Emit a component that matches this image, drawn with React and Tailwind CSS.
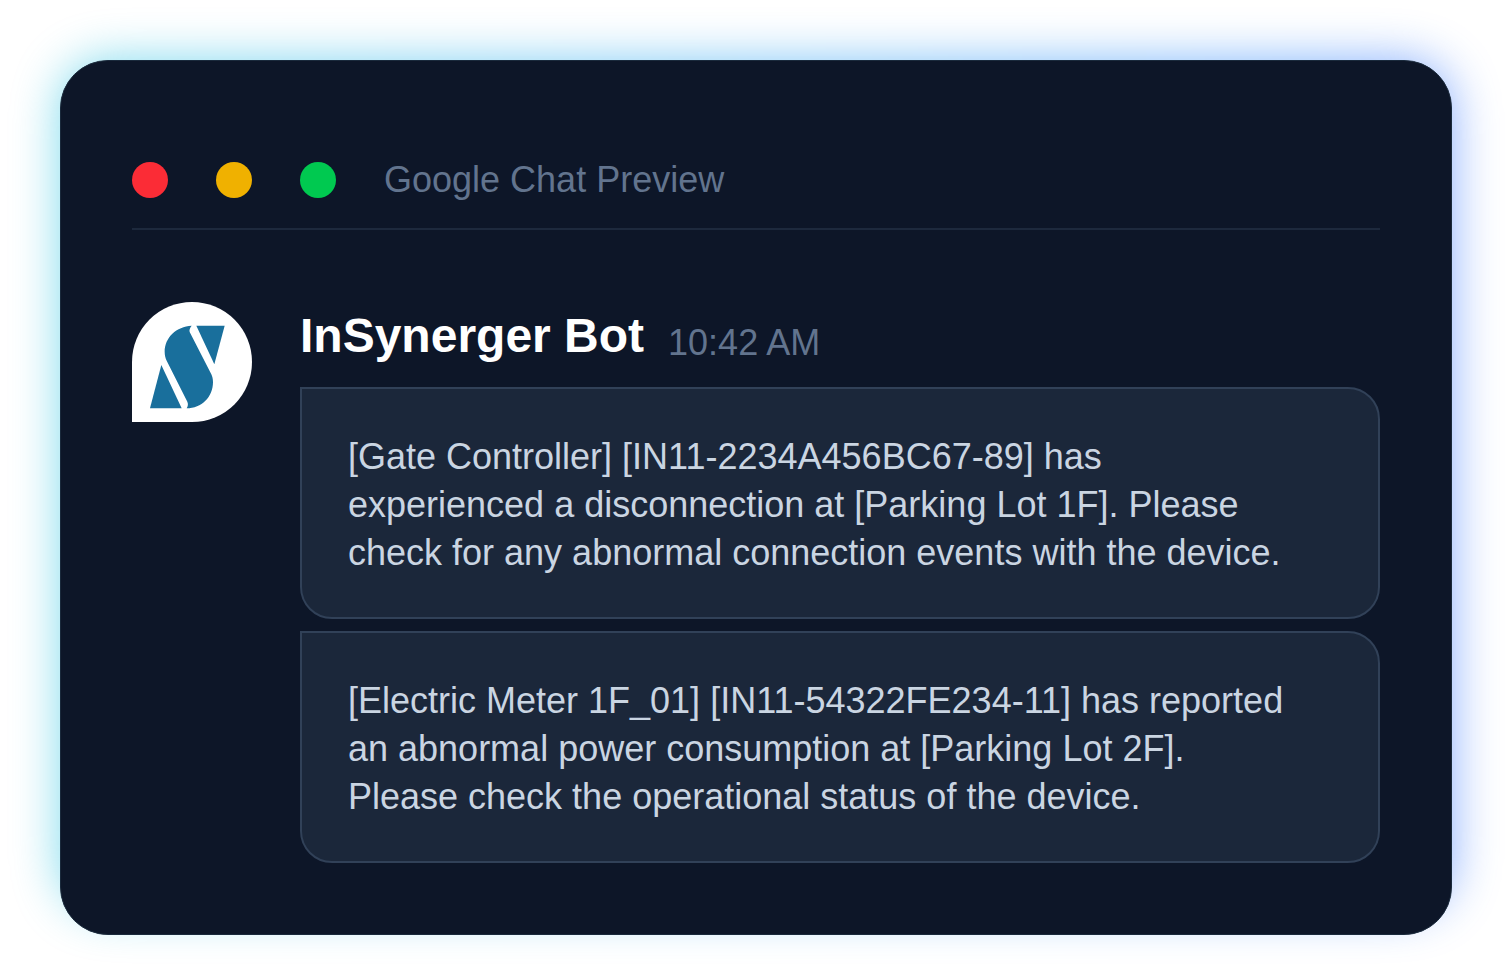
import React from 'react';

const messages = [
  '[Gate Controller] [IN11-2234A456BC67-89] has experienced a disconnection at [Parking Lot 1F]. Please check for any abnormal connection events with the device.',
  '[Electric Meter 1F_01] [IN11-54322FE234-11] has reported an abnormal power consumption at [Parking Lot 2F]. Please check the operational status of the device.',
];

function BotAvatar() {
  return (
    <div className="size-30 shrink-0 overflow-hidden rounded-full rounded-bl-none bg-white">
      <svg className="size-full" viewBox="0 0 360 360" fill="#196f9c" aria-hidden="true">
        <path d="M193 71H278L247 187Z" />
        <path d="M88 189L54 319H149Z" />
        <path d="M179 71C133 73 98 107 98 149C98 159 100 168 104 176L166 299C169 306 168 312 164 319C209 319 243 285 243 240C243 231 241 224 238 217L173 90C171 84 174 77 179 71Z" />
      </svg>
    </div>
  );
}

function Bubble({ text }) {
  return (
    <p className="rounded-[32px] rounded-tl-none border-2 border-[#314158] bg-[#1b273a] pt-11 pr-22 pb-10 pl-[46px] text-4xl leading-12 text-[#cad5e2]">
      {text}
    </p>
  );
}

export default function App() {
  return (
    <main className="bg-white px-15 pt-15 pb-9 font-['Liberation_Sans',Arial,sans-serif]">
      <div className="relative">
        {/* Glow behind the window */}
        <div className="absolute inset-x-0 top-0 bottom-6 rounded-[48px] bg-linear-to-r from-cyan-500 to-blue-600 opacity-50 blur-xl" />
        <section className="relative rounded-[48px] border border-[#1a2a3c] bg-[#0d1628] px-[71px] pt-[95px] pb-[71px]">
          <header className="flex items-center gap-12 border-b-2 border-[#1d293d] pb-6">
            <span className="size-9 rounded-full bg-[#fb2c36]" />
            <span className="size-9 rounded-full bg-[#f0b100]" />
            <span className="size-9 rounded-full bg-[#00c950]" />
            <h1 className="text-4xl leading-12 text-[#62748e]">Google Chat Preview</h1>
          </header>
          <div className="mt-18 flex items-start gap-12">
            <BotAvatar />
            <div className="min-w-0 flex-1">
              <div className="flex items-end gap-6">
                <h2 className="text-5xl leading-[68px] font-bold text-white">InSynerger Bot</h2>
                <time className="text-4xl leading-[54px] text-[#62748e]">10:42 AM</time>
              </div>
              <div className="mt-[17px] flex flex-col gap-3">
                {messages.map((text) => (
                  <Bubble key={text} text={text} />
                ))}
              </div>
            </div>
          </div>
        </section>
      </div>
    </main>
  );
}
